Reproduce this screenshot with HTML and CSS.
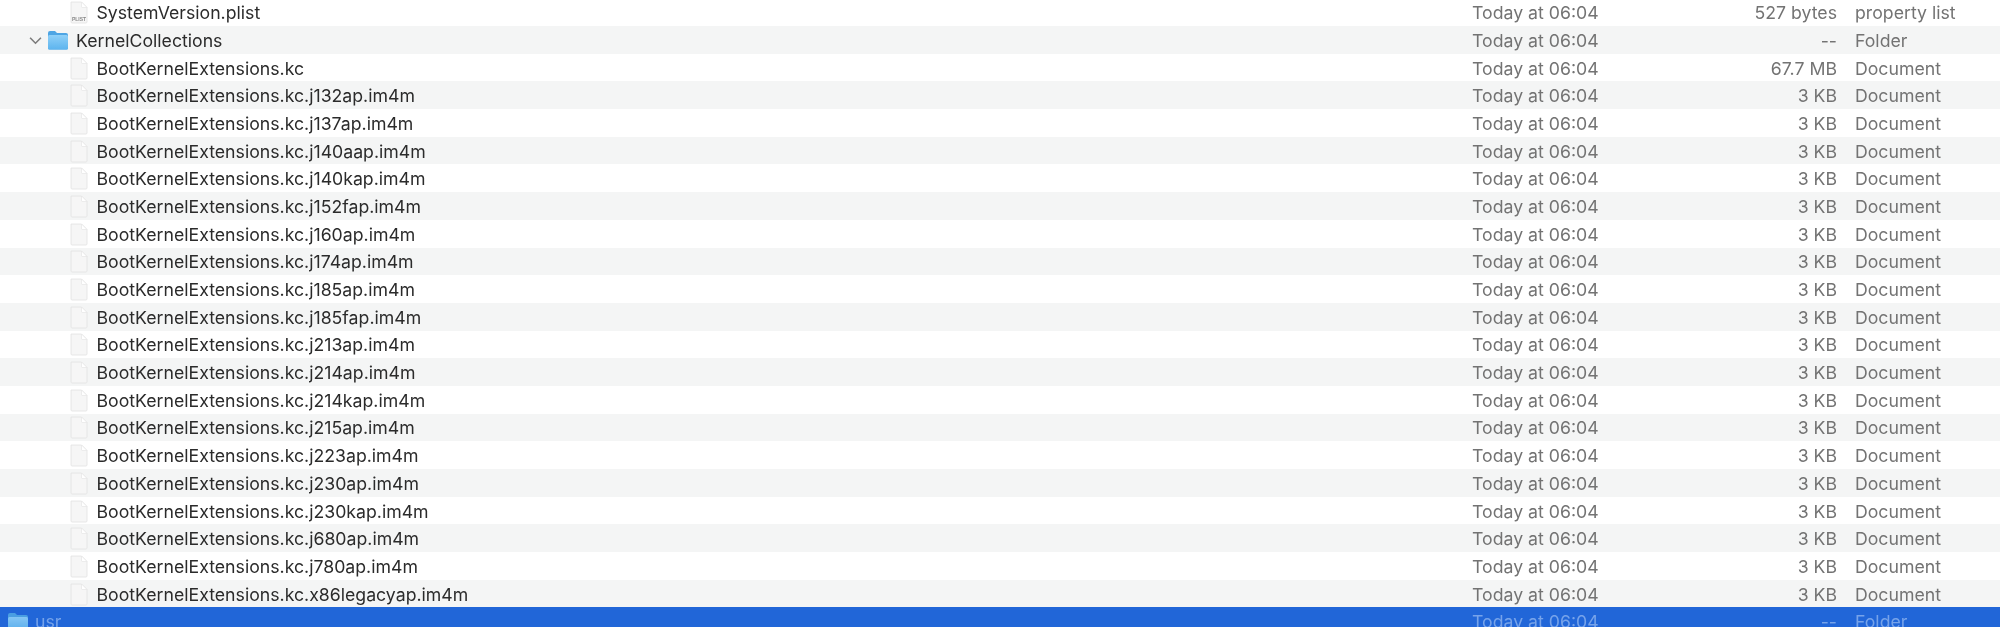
FILE: index.html
```html
<!DOCTYPE html>
<html lang="en">
<head>
<meta charset="utf-8">
<title>Finder list</title>
<link rel="stylesheet" href="styles.css">
</head>
<body>
<svg class="defs" width="0" height="0" aria-hidden="true">
  <defs>
    <linearGradient id="fold" x1="0" y1="0" x2="0" y2="1"><stop offset="0" stop-color="#8fd0f8"/><stop offset="1" stop-color="#5db4ee"/></linearGradient>
    <symbol id="doc" viewBox="0 0 20 23">
      <path d="M2 1h10.500l5.500 5.500v14.500a1 1 0 0 1-1 1H3a1 1 0 0 1-1-1z" fill="#f6f6f6" stroke="#e2e2e2" stroke-width=".8"/>
      <path d="M12.500 1v4.500a1 1 0 0 0 1 1h4.500z" fill="#fff" stroke="#e2e2e2" stroke-width=".6"/>
    </symbol>
    <symbol id="folder" viewBox="0 0 22 20">
      <path d="M1 3a2 2 0 0 1 2-2h5l2 2h9a2 2 0 0 1 2 2v13a1.500 1.500 0 0 1-1.500 1.500h-17A1.500 1.500 0 0 1 1 18z" fill="#4ea5e4"/>
      <rect x="1" y="5" width="20" height="14.500" rx="1.500" fill="url(#fold)"/>
    </symbol>
  </defs>
</svg>
<main class="list">
  <div class="row top"><span class="name indent"><svg class="ic doc"><use href="#doc"/></svg><svg class="plist" viewBox="0 0 20 6"><text x="10" y="5" text-anchor="middle">PLIST</text></svg>SystemVersion.plist</span><span class="date">Today at 06:04</span><span class="size">527 bytes</span><span class="kind">property list</span></div>
  <div class="row"><span class="name"><svg class="chev" viewBox="0 0 12 8"><path d="M1 1.500l5 5 5-5" fill="none" stroke="#7c7c7c" stroke-width="1.500"/></svg><svg class="ic folder"><use href="#folder"/></svg>KernelCollections</span><span class="date">Today at 06:04</span><span class="size">--</span><span class="kind">Folder</span></div>
  <div class="row"><span class="name indent"><svg class="ic doc"><use href="#doc"/></svg>BootKernelExtensions.kc</span><span class="date">Today at 06:04</span><span class="size">67.7 MB</span><span class="kind">Document</span></div>
  <div class="row"><span class="name indent"><svg class="ic doc"><use href="#doc"/></svg>BootKernelExtensions.kc.j132ap.im4m</span><span class="date">Today at 06:04</span><span class="size">3 KB</span><span class="kind">Document</span></div>
  <div class="row"><span class="name indent"><svg class="ic doc"><use href="#doc"/></svg>BootKernelExtensions.kc.j137ap.im4m</span><span class="date">Today at 06:04</span><span class="size">3 KB</span><span class="kind">Document</span></div>
  <div class="row"><span class="name indent"><svg class="ic doc"><use href="#doc"/></svg>BootKernelExtensions.kc.j140aap.im4m</span><span class="date">Today at 06:04</span><span class="size">3 KB</span><span class="kind">Document</span></div>
  <div class="row"><span class="name indent"><svg class="ic doc"><use href="#doc"/></svg>BootKernelExtensions.kc.j140kap.im4m</span><span class="date">Today at 06:04</span><span class="size">3 KB</span><span class="kind">Document</span></div>
  <div class="row"><span class="name indent"><svg class="ic doc"><use href="#doc"/></svg>BootKernelExtensions.kc.j152fap.im4m</span><span class="date">Today at 06:04</span><span class="size">3 KB</span><span class="kind">Document</span></div>
  <div class="row"><span class="name indent"><svg class="ic doc"><use href="#doc"/></svg>BootKernelExtensions.kc.j160ap.im4m</span><span class="date">Today at 06:04</span><span class="size">3 KB</span><span class="kind">Document</span></div>
  <div class="row"><span class="name indent"><svg class="ic doc"><use href="#doc"/></svg>BootKernelExtensions.kc.j174ap.im4m</span><span class="date">Today at 06:04</span><span class="size">3 KB</span><span class="kind">Document</span></div>
  <div class="row"><span class="name indent"><svg class="ic doc"><use href="#doc"/></svg>BootKernelExtensions.kc.j185ap.im4m</span><span class="date">Today at 06:04</span><span class="size">3 KB</span><span class="kind">Document</span></div>
  <div class="row"><span class="name indent"><svg class="ic doc"><use href="#doc"/></svg>BootKernelExtensions.kc.j185fap.im4m</span><span class="date">Today at 06:04</span><span class="size">3 KB</span><span class="kind">Document</span></div>
  <div class="row"><span class="name indent"><svg class="ic doc"><use href="#doc"/></svg>BootKernelExtensions.kc.j213ap.im4m</span><span class="date">Today at 06:04</span><span class="size">3 KB</span><span class="kind">Document</span></div>
  <div class="row"><span class="name indent"><svg class="ic doc"><use href="#doc"/></svg>BootKernelExtensions.kc.j214ap.im4m</span><span class="date">Today at 06:04</span><span class="size">3 KB</span><span class="kind">Document</span></div>
  <div class="row"><span class="name indent"><svg class="ic doc"><use href="#doc"/></svg>BootKernelExtensions.kc.j214kap.im4m</span><span class="date">Today at 06:04</span><span class="size">3 KB</span><span class="kind">Document</span></div>
  <div class="row"><span class="name indent"><svg class="ic doc"><use href="#doc"/></svg>BootKernelExtensions.kc.j215ap.im4m</span><span class="date">Today at 06:04</span><span class="size">3 KB</span><span class="kind">Document</span></div>
  <div class="row"><span class="name indent"><svg class="ic doc"><use href="#doc"/></svg>BootKernelExtensions.kc.j223ap.im4m</span><span class="date">Today at 06:04</span><span class="size">3 KB</span><span class="kind">Document</span></div>
  <div class="row"><span class="name indent"><svg class="ic doc"><use href="#doc"/></svg>BootKernelExtensions.kc.j230ap.im4m</span><span class="date">Today at 06:04</span><span class="size">3 KB</span><span class="kind">Document</span></div>
  <div class="row"><span class="name indent"><svg class="ic doc"><use href="#doc"/></svg>BootKernelExtensions.kc.j230kap.im4m</span><span class="date">Today at 06:04</span><span class="size">3 KB</span><span class="kind">Document</span></div>
  <div class="row"><span class="name indent"><svg class="ic doc"><use href="#doc"/></svg>BootKernelExtensions.kc.j680ap.im4m</span><span class="date">Today at 06:04</span><span class="size">3 KB</span><span class="kind">Document</span></div>
  <div class="row"><span class="name indent"><svg class="ic doc"><use href="#doc"/></svg>BootKernelExtensions.kc.j780ap.im4m</span><span class="date">Today at 06:04</span><span class="size">3 KB</span><span class="kind">Document</span></div>
  <div class="row"><span class="name indent"><svg class="ic doc"><use href="#doc"/></svg>BootKernelExtensions.kc.x86legacyap.im4m</span><span class="date">Today at 06:04</span><span class="size">3 KB</span><span class="kind">Document</span></div>
  <div class="row selected"><span class="name root"><svg class="ic folder"><use href="#folder"/></svg>usr</span><span class="date">Today at 06:04</span><span class="size">--</span><span class="kind">Folder</span></div>
</main>
</body>
</html>
```

FILE: styles.css
```css
html, body {
  margin: 0;
  height: 627px;
  overflow: hidden;
  background: #fff;
}
.defs { position: absolute; }
.list {
  display: grid;
  grid-auto-rows: 27.7px;
  margin-top: -1.7px;
  font-family: Inter, "Noto Sans", sans-serif;
  font-size: 17.7px;
  color: #2b2b2b;
  filter: blur(.35px);
}
.row {
  display: grid;
  grid-template-columns: 1472px 365px 18px 1fr;
  align-items: center;
  box-sizing: border-box;
  padding-top: 1px;
  white-space: nowrap;
}
.row:nth-child(even) { background: #f4f5f5; }
.name {
  position: relative;
  display: flex;
  align-items: center;
  padding-left: 29px;
}
.name.indent { padding-left: 69px; }
.name.root { padding-left: 7px; }
.date, .size, .kind { color: #737373; }
.date { grid-column: 2; grid-row: 1; }
.size { grid-column: 2; grid-row: 1; text-align: right; }
.kind { grid-column: 4; }
.ic { flex: none; }
.doc { width: 20px; height: 23px; margin-right: 7.5px; }
.folder { width: 22px; height: 20px; margin-right: 7px; }
.root .folder { margin-right: 6px; }
.chev { width: 13px; height: 9px; margin-right: 5px; flex: none; }
.plist {
  position: absolute;
  left: 69px;
  top: 15px;
  width: 20px;
  height: 6px;
}
.plist text {
  font-family: "Liberation Sans", sans-serif;
  font-size: 5px;
  font-weight: 700;
  fill: #8a8a8a;
}
.selected { background: #2166d8 !important; }
.selected .name, .selected .date, .selected .size, .selected .kind { color: #76a3ea; }
.selected .folder { opacity: .9; }
```
